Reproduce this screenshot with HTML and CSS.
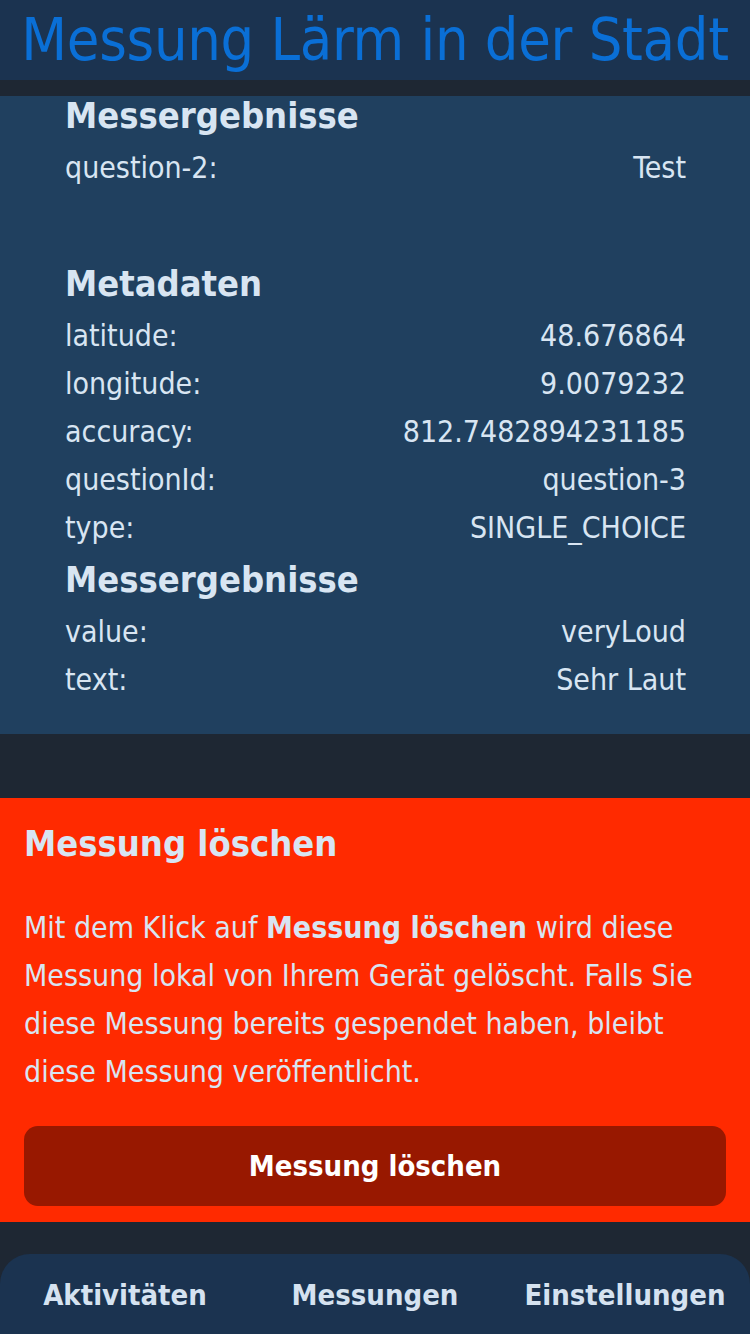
FILE: index.html
```html
<!DOCTYPE html>
<html lang="de">
<head>
<meta charset="utf-8">
<link rel="stylesheet" href="styles.css">
</head>
<body>
<div class="app">
  <header class="topbar"><h1 class="title">Messung Lärm in der Stadt</h1></header>
  <main class="content">
    <section class="card">
      <h2 class="sec">Messergebnisse</h2>
      <div class="row"><span>question-2:</span><span>Test</span></div>
      <div class="spacer"></div>
      <h2 class="sec">Metadaten</h2>
      <div class="row"><span>latitude:</span><span>48.676864</span></div>
      <div class="row"><span>longitude:</span><span>9.0079232</span></div>
      <div class="row"><span>accuracy:</span><span>812.7482894231185</span></div>
      <div class="row"><span>questionId:</span><span>question-3</span></div>
      <div class="row"><span>type:</span><span>SINGLE_CHOICE</span></div>
      <h2 class="sec sec-tight">Messergebnisse</h2>
      <div class="row"><span>value:</span><span>veryLoud</span></div>
      <div class="row"><span>text:</span><span>Sehr Laut</span></div>
    </section>
    <section class="danger">
      <h2 class="danger-title">Messung löschen</h2>
      <p class="danger-text">Mit dem Klick auf <strong>Messung löschen</strong> wird diese Messung lokal von Ihrem Gerät gelöscht. Falls Sie diese Messung bereits gespendet haben, bleibt diese Messung veröffentlicht.</p>
      <button class="danger-btn">Messung löschen</button>
    </section>
  </main>
  <nav class="tabbar">
    <span class="tab">Aktivitäten</span>
    <span class="tab">Messungen</span>
    <span class="tab">Einstellungen</span>
  </nav>
</div>
</body>
</html>
```
FILE: styles.css
```css
* { box-sizing: border-box; margin: 0; padding: 0; }
html, body { width: 750px; height: 1334px; overflow: hidden; }
body {
  background: #1e2733;
  font-family: "DejaVu Sans Condensed", "DejaVu Sans", sans-serif;
  color: #d8e5f2;
}
.app { display: flex; flex-direction: column; height: 1334px; }
.topbar {
  height: 80px;
  background: #1b3350;
  display: flex;
  align-items: center;
  justify-content: center;
}
.title {
  font-weight: 400;
  font-size: 59px;
  color: #0a6fd6;
  line-height: 1;
  letter-spacing: -0.3px;
  padding-bottom: 2px;
}
.content { flex: 1; display: flex; flex-direction: column; padding-top: 16px; }
.card {
  background: #20405f;
  padding: 0 64px 30px 65px;
  height: 638px;
}
.sec {
  font-size: 36px;
  font-weight: 700;
  line-height: 40px;
  margin-bottom: 8px;
}
.sec-tight { margin-top: 8px; }
.row {
  display: flex;
  justify-content: space-between;
  font-size: 30px;
  line-height: 48px;
}
.spacer { height: 72px; }
.danger {
  margin-top: 64px;
  background: #ff2a00;
  padding: 22px 24px 16px;
  height: 424px;
}
.danger-title {
  font-size: 36px;
  font-weight: 700;
  line-height: 48px;
  margin-bottom: 36px;
}
.danger-text {
  font-size: 30px;
  line-height: 48px;
}
.danger-text strong { font-weight: 700; }
.danger-btn {
  margin-top: 30px;
  width: 100%;
  height: 80px;
  border: none;
  border-radius: 14px;
  background: #981800;
  color: #ffffff;
  font-family: inherit;
  font-size: 29px;
  font-weight: 700;
}
.tabbar {
  margin-top: 32px;
  height: 80px;
  background: #1b3350;
  border-radius: 30px 30px 0 0;
  display: grid;
  grid-template-columns: repeat(3, 1fr);
  align-items: center;
  padding-top: 2px;
}
.tab { text-align: center; font-size: 29px; font-weight: 700; color: #d5e2f0; white-space: nowrap; }
```
